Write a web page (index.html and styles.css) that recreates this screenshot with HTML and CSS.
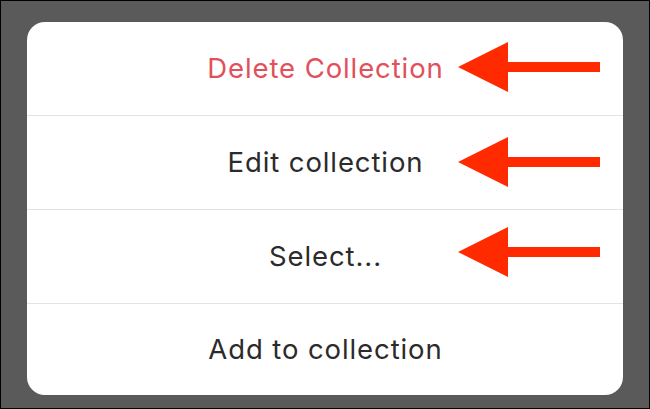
FILE: index.html
```html
<!DOCTYPE html>
<html>
<head>
<meta charset="utf-8">
<link rel="stylesheet" href="styles.css">
</head>
<body>
<div class="screen">
  <div class="sheet">
    <div class="row destructive">
      <span class="label">Delete Collection</span>
      <svg class="arrow a1" width="144" height="52" viewBox="0 0 144 52"><polygon points="0,25 50,0 50,20 142,20 142,30 50,30 50,50" fill="#ff2a00"/></svg>
    </div>
    <div class="row">
      <span class="label">Edit collection</span>
      <svg class="arrow a2" width="144" height="52" viewBox="0 0 144 52"><polygon points="0,25 50,0 50,20 142,20 142,30 50,30 50,50" fill="#ff2a00"/></svg>
    </div>
    <div class="row">
      <span class="label">Select...</span>
      <svg class="arrow a3" width="144" height="52" viewBox="0 0 144 52"><polygon points="0,25 50,0 50,20 142,20 142,30 50,30 50,50" fill="#ff2a00"/></svg>
    </div>
    <div class="row">
      <span class="label">Add to collection</span>
    </div>
  </div>
</div>
</body>
</html>
```
FILE: styles.css
```css
html, body {
  margin: 0;
  padding: 0;
  background: #5a5a5a;
}
.screen {
  box-sizing: border-box;
  width: 650px;
  height: 409px;
  border: 1px solid #000;
  background: #5a5a5a;
  padding: 21px 26px 0 26px;
}
.sheet {
  width: 596px;
  height: 373px;
  background: #fff;
  border-radius: 18px;
  overflow: hidden;
  display: flex;
  flex-direction: column;
}
.row {
  position: relative;
  height: 93px;
  flex: none;
  display: flex;
  align-items: center;
  justify-content: center;
  border-bottom: 1px solid #e3e3e3;
  font-family: Inter, "Noto Sans", sans-serif;
  font-size: 27.5px;
  color: #2b2b2b;
}
.row:last-child {
  border-bottom: none;
  flex: 1;
}
.destructive {
  color: #e2505c;
}
.label {
  display: block;
  letter-spacing: 0.9px;
  padding-left: 1px;
  padding-bottom: 2px;
}
.arrow {
  position: absolute;
  left: 431px;
}
.a1 { top: 20px; }
.a2 { top: 21px; }
.a3 { top: 17px; }
```
